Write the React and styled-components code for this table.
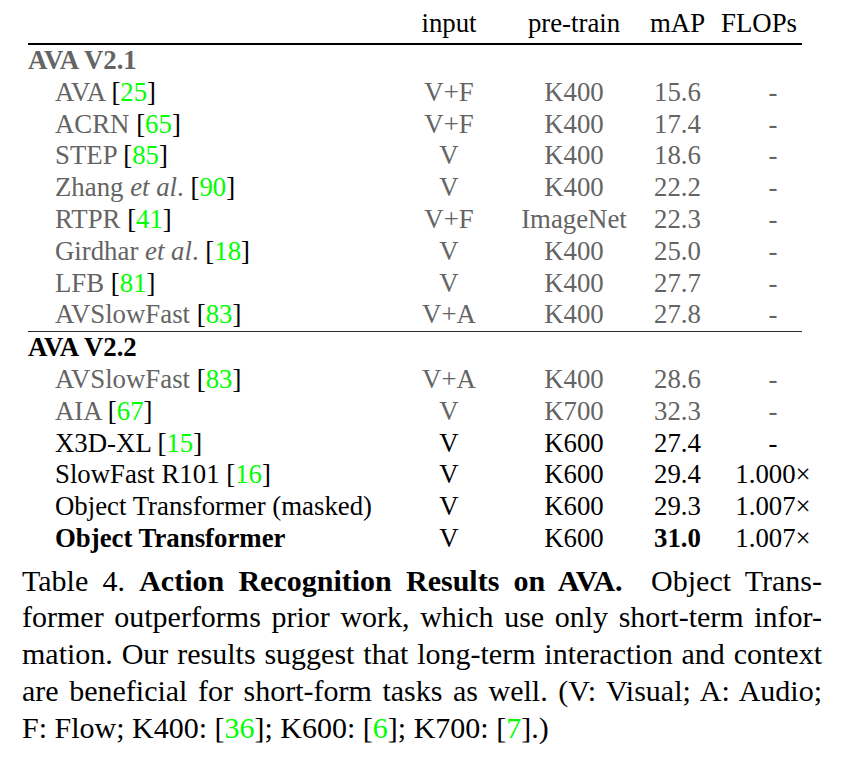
import React from "react";
import styled, { createGlobalStyle } from "styled-components";

const GlobalStyle = createGlobalStyle`
  html, body {
    margin: 0;
    padding: 0;
    background: #fff;
  }
  body {
    font-family: "Liberation Serif", "Times New Roman", serif;
    color: #000;
  }
`;

const COLS = "361px 120px 130px 77px 86px";
const MUTED = "#646464";
const GREEN = "#00ff00";

const Page = styled.div`
  width: 844px;
  height: 764px;
  box-sizing: border-box;
  padding-top: 7.6px;
  overflow: hidden;
`;

const Table = styled.div`
  margin-left: 28px;
  width: 774px;
  font-size: 26.8px;
  line-height: 31.8px;
`;

const HeadRow = styled.div`
  display: grid;
  grid-template-columns: ${COLS};
  padding-bottom: 3.6px;
  border-bottom: 2px solid #000;
`;

const Section = styled.div`
  border-bottom: ${({ $ruled }) => ($ruled ? "1.5px solid #2a2a2a" : "none")};
`;

const GroupTitle = styled.div`
  font-weight: 700;
  color: ${({ $muted }) => ($muted ? MUTED : "#000")};
`;

const Row = styled.div`
  display: grid;
  grid-template-columns: ${COLS};
  color: ${({ $muted }) => ($muted ? MUTED : "#000")};
`;

const NameCell = styled.div`
  padding-left: 27px;
  white-space: nowrap;
  font-weight: ${({ $bold }) => ($bold ? 700 : 400)};
`;

const Cell = styled.div`
  text-align: center;
  white-space: nowrap;
  padding-left: ${({ $shift }) => ($shift ? "16px" : "0")};
  margin-right: ${({ $shift }) => ($shift ? "-12px" : "0")};
  font-weight: ${({ $bold }) => ($bold ? 700 : 400)};
`;

const Bracket = styled.span`
  color: #000;
`;

const Cite = styled.span`
  color: ${GREEN};
`;

const Caption = styled.div`
  margin: 7.8px 0 0 22px;
  width: 800px;
  font-size: 30px;
  line-height: 36.9px;
`;

const CaptionLine = styled.div`
  text-align: justify;
  text-align-last: ${({ $last }) => ($last ? "left" : "justify")};
  white-space: nowrap;
`;

const Ref = ({ n }) => (
  <>
    {" "}
    <Bracket>[</Bracket>
    <Cite>{n}</Cite>
    <Bracket>]</Bracket>
  </>
);

const v21 = [
  { name: "AVA", cite: 25, input: "V+F", pre: "K400", map: "15.6" },
  { name: "ACRN", cite: 65, input: "V+F", pre: "K400", map: "17.4" },
  { name: "STEP", cite: 85, input: "V", pre: "K400", map: "18.6" },
  { name: "Zhang", etal: true, cite: 90, input: "V", pre: "K400", map: "22.2" },
  { name: "RTPR", cite: 41, input: "V+F", pre: "ImageNet", map: "22.3" },
  { name: "Girdhar", etal: true, cite: 18, input: "V", pre: "K400", map: "25.0" },
  { name: "LFB", cite: 81, input: "V", pre: "K400", map: "27.7" },
  { name: "AVSlowFast", cite: 83, input: "V+A", pre: "K400", map: "27.8" },
];

const v22 = [
  { name: "AVSlowFast", cite: 83, input: "V+A", pre: "K400", map: "28.6", muted: true },
  { name: "AIA", cite: 67, input: "V", pre: "K700", map: "32.3", muted: true },
  { name: "X3D-XL", cite: 15, input: "V", pre: "K600", map: "27.4" },
  { name: "SlowFast R101", cite: 16, input: "V", pre: "K600", map: "29.4", flops: "1.000×" },
  { name: "Object Transformer (masked)", input: "V", pre: "K600", map: "29.3", flops: "1.007×" },
  { name: "Object Transformer", bold: true, input: "V", pre: "K600", map: "31.0", flops: "1.007×" },
];

const ResultRow = ({ r, muted }) => (
  <Row $muted={muted}>
    <NameCell $bold={r.bold}>
      {r.name}
      {r.etal && (
        <>
          {" "}
          <i>et al</i>.
        </>
      )}
      {r.cite && <Ref n={r.cite} />}
    </NameCell>
    <Cell>{r.input}</Cell>
    <Cell>{r.pre}</Cell>
    <Cell $bold={r.bold}>{r.map}</Cell>
    <Cell $shift>{r.flops || "-"}</Cell>
  </Row>
);

export default function App() {
  return (
    <Page>
      <GlobalStyle />
      <Table>
        <HeadRow>
          <div />
          <Cell>input</Cell>
          <Cell>pre-train</Cell>
          <Cell>mAP</Cell>
          <Cell>FLOPs</Cell>
        </HeadRow>
        <Section $ruled>
          <GroupTitle $muted>AVA V2.1</GroupTitle>
          {v21.map((r) => (
            <ResultRow key={r.name + r.map} r={r} muted />
          ))}
        </Section>
        <Section>
          <GroupTitle>AVA V2.2</GroupTitle>
          {v22.map((r) => (
            <ResultRow key={r.name + r.map} r={r} muted={r.muted} />
          ))}
        </Section>
      </Table>
      <Caption>
        <CaptionLine>
          Table 4. <b>Action Recognition Results on AVA.</b>&nbsp; Object Trans-
        </CaptionLine>
        <CaptionLine>
          former outperforms prior work, which use only short-term infor-
        </CaptionLine>
        <CaptionLine>
          mation. Our results suggest that long-term interaction and context
        </CaptionLine>
        <CaptionLine>
          are beneficial for short-form tasks as well. (V: Visual; A: Audio;
        </CaptionLine>
        <CaptionLine $last>
          F: Flow; K400: [<Cite>36</Cite>]; K600: [<Cite>6</Cite>]; K700: [
          <Cite>7</Cite>].)
        </CaptionLine>
      </Caption>
    </Page>
  );
}
